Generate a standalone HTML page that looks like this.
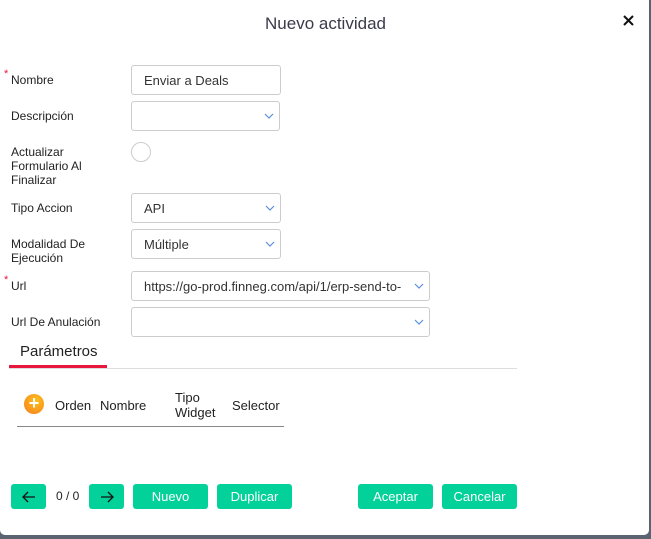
<!DOCTYPE html>
<html><head><style>
*{margin:0;padding:0;box-sizing:border-box}
body{width:651px;height:539px;background:#5b6270;position:relative;overflow:hidden;font-family:"Liberation Sans",sans-serif;color:#222}
#d{position:absolute;left:0;top:0;width:649px;height:535px;background:#fff;border-radius:0 0 5px 5px}
.a{position:absolute}
.l{font-size:12px;line-height:14px;color:#222}
.f{position:absolute;border:1px solid #ccc;border-radius:3px;background:#fff;font-size:13px;color:#333;padding-left:12px;display:flex;align-items:center}
.f svg{position:absolute;right:5px;top:11px}
.b{position:absolute;top:484px;height:25px;background:#03d19a;border-radius:3px;color:#fff;font-size:13px;display:flex;align-items:center;justify-content:center}
.r{color:#e8173c;font-size:11px}
</style></head><body><div id="d">
<div class="a" style="left:0;width:651px;top:14px;text-align:center;font-size:17px;color:#3a3a4a">Nuevo actividad</div>
<svg class="a" style="left:623px;top:15px" width="11" height="11"><path d="M1 1l9 9M10 1l-9 9" stroke="#111" stroke-width="2"/></svg>

<div class="a r" style="left:4px;top:68px">*</div>
<div class="a l" style="left:11px;top:73px">Nombre</div>
<div class="f" style="left:131px;top:65px;width:150px;height:30px">Enviar a Deals</div>
<div class="a l" style="left:11px;top:109px">Descripción</div>
<div class="f" style="left:131px;top:101px;width:149px;height:30px"><svg width="10" height="6"><path d="M1 1l4 4 4-4" stroke="#5b8fd8" fill="none" stroke-width="1.2"/></svg></div>
<div class="a l" style="left:11px;top:145px">Actualizar<br>Formulario Al<br>Finalizar</div>
<div class="a" style="left:131px;top:142px;width:20px;height:20px;border:1px solid #ccc;border-radius:50%"></div>
<div class="a l" style="left:11px;top:201px">Tipo Accion</div>
<div class="f" style="left:131px;top:193px;width:150px;height:30px">API<svg width="10" height="6"><path d="M1 1l4 4 4-4" stroke="#5b8fd8" fill="none" stroke-width="1.2"/></svg></div>
<div class="a l" style="left:11px;top:237px">Modalidad De<br>Ejecución</div>
<div class="f" style="left:131px;top:229px;width:150px;height:30px">Múltiple<svg width="10" height="6"><path d="M1 1l4 4 4-4" stroke="#5b8fd8" fill="none" stroke-width="1.2"/></svg></div>
<div class="a r" style="left:4px;top:274px">*</div>
<div class="a l" style="left:11px;top:279px">Url</div>
<div class="f" style="left:131px;top:271px;width:299px;height:30px">https://go-prod.finneg.com/api/1/erp-send-to-<svg width="10" height="6"><path d="M1 1l4 4 4-4" stroke="#5b8fd8" fill="none" stroke-width="1.2"/></svg></div>
<div class="a l" style="left:11px;top:315px">Url De Anulación</div>
<div class="f" style="left:131px;top:307px;width:299px;height:30px"><svg width="10" height="6"><path d="M1 1l4 4 4-4" stroke="#5b8fd8" fill="none" stroke-width="1.2"/></svg></div>

<div class="a" style="left:20px;top:343px;font-size:15px;color:#222">Parámetros</div>
<div class="a" style="left:9px;top:368px;width:508px;height:1px;background:#ddd"></div>
<div class="a" style="left:9px;top:365px;width:98px;height:3px;background:#e8173c"></div>

<div class="a" style="left:24px;top:394px;width:20px;height:20px;border-radius:50%;background:radial-gradient(circle at 60% 35%,#ffc21a,#f47a1f);color:#fff;font-size:18px;line-height:19px;text-align:center;font-weight:bold">+</div>
<div class="a" style="left:55px;top:398px;font-size:13px">Orden</div>
<div class="a" style="left:100px;top:398px;font-size:13px">Nombre</div>
<div class="a" style="left:175px;top:390px;font-size:13px;line-height:15px">Tipo<br>Widget</div>
<div class="a" style="left:232px;top:398px;font-size:13px">Selector</div>
<div class="a" style="left:17px;top:426px;width:267px;height:1px;background:#888"></div>

<div class="b" style="left:11px;width:35px"><svg width="14" height="12"><path d="M13 6H2M6 1L1 6l5 5" stroke="#111" fill="none" stroke-width="1.3"/></svg></div>
<div class="a" style="left:56px;top:489px;font-size:12px">0 / 0</div>
<div class="b" style="left:89px;width:35px"><svg width="14" height="12"><path d="M1 6h11M8 1l5 5-5 5" stroke="#111" fill="none" stroke-width="1.3"/></svg></div>
<div class="b" style="left:133px;width:75px">Nuevo</div>
<div class="b" style="left:217px;width:75px">Duplicar</div>
<div class="b" style="left:358px;width:75px">Aceptar</div>
<div class="b" style="left:442px;width:75px">Cancelar</div>
</div></body></html>
